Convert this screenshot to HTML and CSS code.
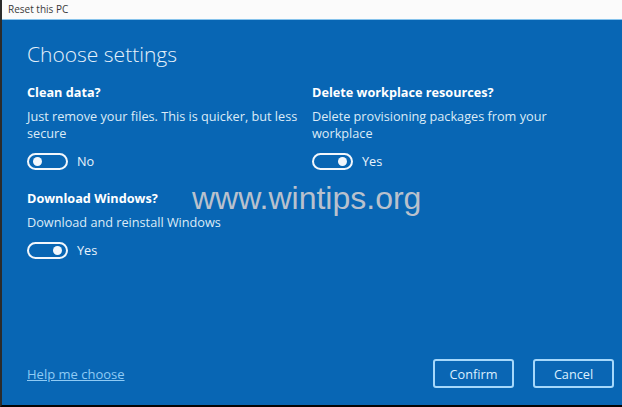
FILE: index.html
```html
<!DOCTYPE html>
<html lang="en">
<head>
<meta charset="utf-8">
<title>Reset this PC</title>
<link rel="stylesheet" href="styles.css">
</head>
<body>
<div class="window">
  <div class="titlebar">Reset this PC</div>
  <div class="content">
    <h1 class="heading">Choose settings</h1>
    <div class="settings">
      <div class="setting">
        <div class="setting-title">Clean data?</div>
        <div class="setting-desc">Just remove your files. This is quicker, but less secure</div>
        <div class="toggle-row">
          <span class="toggle"><span class="knob"></span></span>
          <span class="toggle-label">No</span>
        </div>
      </div>
      <div class="setting">
        <div class="setting-title">Delete workplace resources?</div>
        <div class="setting-desc">Delete provisioning packages from your workplace</div>
        <div class="toggle-row">
          <span class="toggle on"><span class="knob"></span></span>
          <span class="toggle-label">Yes</span>
        </div>
      </div>
      <div class="setting">
        <div class="setting-title">Download Windows?</div>
        <div class="setting-desc">Download and reinstall Windows</div>
        <div class="toggle-row">
          <span class="toggle on"><span class="knob"></span></span>
          <span class="toggle-label">Yes</span>
        </div>
      </div>
    </div>
  </div>
  <div class="footer">
    <a class="help-link" href="#">Help me choose</a>
    <div class="buttons">
      <button class="btn">Confirm</button>
      <button class="btn">Cancel</button>
    </div>
  </div>
  <div class="watermark">www.wintips.org</div>
</div>
</body>
</html>
```

FILE: styles.css
```css
* { box-sizing: border-box; }
html, body { margin: 0; padding: 0; }
body {
  width: 622px;
  height: 407px;
  overflow: hidden;
  font-family: "Open Sans", "Noto Sans", sans-serif;
  background: #0a66b4;
}
.window {
  position: relative;
  width: 622px;
  height: 407px;
  display: flex;
  flex-direction: column;
  background: #0866b4;
  border-left: 2px solid #2b2b2b;
  border-bottom: 2px solid #050505;
}
.titlebar {
  height: 20px;
  background: #fbfbfb;
  border-bottom: 1px solid #86c3ec;
  color: #3a3a3a;
  font-size: 10px;
  line-height: 19px;
  padding-left: 6px;
}
.content {
  flex: 1;
  padding: 20px 0 0 25px;
}
.heading {
  margin: 0;
  font-size: 21px;
  font-weight: 300;
  line-height: 29px;
  color: #e6f1fb;
}
.settings {
  margin-top: 15px;
  display: grid;
  grid-template-columns: 285px 285px;
  row-gap: 20px;
}
.setting { padding-right: 4px; }
.setting-title {
  font-size: 12.7px;
  font-weight: 700;
  line-height: 17px;
  color: #ffffff;
}
.setting-desc {
  margin-top: 7px;
  font-size: 12.7px;
  line-height: 17px;
  color: #dcebf7;
}
.toggle-row {
  margin-top: 10px;
  display: flex;
  align-items: center;
  gap: 9px;
}
.toggle {
  width: 41px;
  height: 17px;
  border: 2px solid #f2f7fc;
  border-radius: 9px;
  display: flex;
  align-items: center;
  padding: 0 4px;
}
.toggle.on { justify-content: flex-end; }
.knob {
  width: 9px;
  height: 9px;
  border-radius: 50%;
  background: #f2f7fc;
}
.toggle-label {
  font-size: 12.7px;
  color: #eaf3fb;
}
.footer {
  display: flex;
  align-items: center;
  justify-content: space-between;
  padding: 0 8px 17px 25px;
}
.help-link {
  font-size: 13px;
  color: #8fcbf5;
  text-decoration: underline;
}
.buttons {
  display: flex;
  gap: 19px;
}
.btn {
  width: 81px;
  height: 29px;
  border: 2px solid #a6d8fb;
  border-radius: 3px;
  background: #0a66b4;
  color: #dcefff;
  font-family: "Open Sans", "Noto Sans", sans-serif;
  font-size: 12.7px;
  padding: 0;
}
.watermark {
  position: absolute;
  left: 190px;
  top: 180px;
  font-family: "Liberation Sans", Arial, sans-serif;
  font-size: 32px;
  line-height: 36px;
  color: #b9c1cd;
}
```
